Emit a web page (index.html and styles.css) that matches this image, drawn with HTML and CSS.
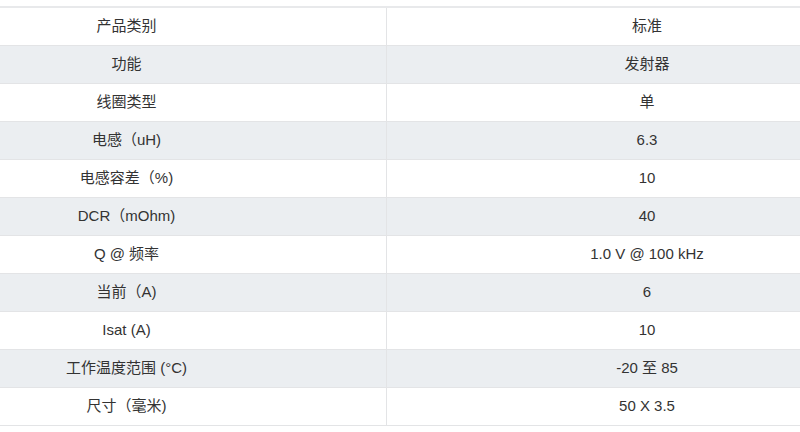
FILE: index.html
```html
<!DOCTYPE html>
<html lang="zh">
<head>
<meta charset="utf-8">
<link rel="stylesheet" href="styles.css">
</head>
<body>
<div class="wrap">
<table class="spec">
<tbody>
<tr><td>产品类别</td><td>标准</td></tr>
<tr class="alt"><td>功能</td><td>发射器</td></tr>
<tr><td>线圈类型</td><td>单</td></tr>
<tr class="alt"><td>电感（uH)</td><td>6.3</td></tr>
<tr><td>电感容差（%)</td><td>10</td></tr>
<tr class="alt"><td>DCR（mOhm)</td><td>40</td></tr>
<tr><td>Q @ 频率</td><td>1.0 V @ 100 kHz</td></tr>
<tr class="alt"><td>当前（A)</td><td>6</td></tr>
<tr><td>Isat (A)</td><td>10</td></tr>
<tr class="alt"><td>工作温度范围 (°C)</td><td>-20 至 85</td></tr>
<tr><td>尺寸（毫米)</td><td>50 X 3.5</td></tr>
</tbody>
</table>
</div>
</body>
</html>
```
FILE: styles.css
```css
html, body {
  margin: 0;
  padding: 0;
  background: #ffffff;
  overflow: hidden;
}
.wrap {
  margin-top: 6px;
  margin-left: -134px;
  width: 1042px;
}
.spec {
  width: 100%;
  border-collapse: collapse;
  table-layout: fixed;
  font-family: "Liberation Sans", Arial, "Noto Sans CJK SC", sans-serif;
  font-size: 15px;
  line-height: 18px;
  color: #333333;
  border-top: 2px solid #e8e9eb;
}
.spec td {
  height: 38px;
  box-sizing: border-box;
  padding: 0;
  text-align: center;
  vertical-align: middle;
  border: 1px solid #e3e4e6;
}
.spec td:first-child {
  width: 520px;
}
.spec tr.alt td {
  background: #ebeef1;
}
```
